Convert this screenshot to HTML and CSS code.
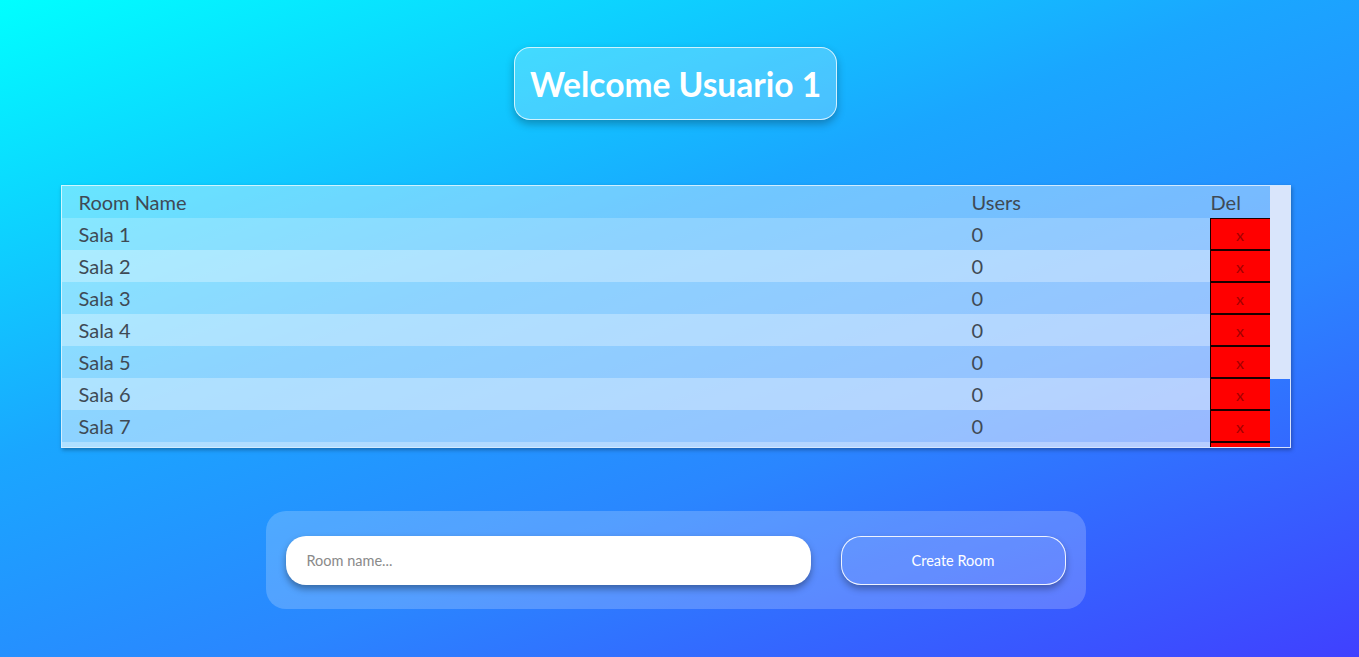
FILE: index.html
```html
<!DOCTYPE html>
<html lang="es">
<head>
<meta charset="utf-8">
<title>Rooms</title>
<link rel="stylesheet" href="styles.css">
</head>
<body>
<main class="page">
  <h1 class="welcome">Welcome Usuario 1</h1>
  <div class="rooms">
    <div class="rooms-scroll">
      <table class="rooms-table">
        <thead>
          <tr><th class="c-name">Room Name</th><th class="c-users">Users</th><th class="c-del">Del</th></tr>
        </thead>
        <tbody>
          <tr><td class="c-name">Sala 1</td><td class="c-users">0</td><td class="c-del"><button class="del">x</button></td></tr>
          <tr><td class="c-name">Sala 2</td><td class="c-users">0</td><td class="c-del"><button class="del">x</button></td></tr>
          <tr><td class="c-name">Sala 3</td><td class="c-users">0</td><td class="c-del"><button class="del">x</button></td></tr>
          <tr><td class="c-name">Sala 4</td><td class="c-users">0</td><td class="c-del"><button class="del">x</button></td></tr>
          <tr><td class="c-name">Sala 5</td><td class="c-users">0</td><td class="c-del"><button class="del">x</button></td></tr>
          <tr><td class="c-name">Sala 6</td><td class="c-users">0</td><td class="c-del"><button class="del">x</button></td></tr>
          <tr><td class="c-name">Sala 7</td><td class="c-users">0</td><td class="c-del"><button class="del">x</button></td></tr>
          <tr><td class="c-name">Sala 8</td><td class="c-users">0</td><td class="c-del"><button class="del">x</button></td></tr>
          <tr><td class="c-name">Sala 9</td><td class="c-users">0</td><td class="c-del"><button class="del">x</button></td></tr>
          <tr><td class="c-name">Sala 10</td><td class="c-users">0</td><td class="c-del"><button class="del">x</button></td></tr>
        </tbody>
      </table>
    </div>
    <div class="scrollbar"><div class="scrollbar-thumb"></div></div>
  </div>
  <form class="create">
    <input class="create-input" type="text" placeholder="Room name...">
    <button class="create-btn" type="button">Create Room</button>
  </form>
</main>
</body>
</html>
```
FILE: styles.css
```css
html, body {
  margin: 0;
  height: 100%;
}
body {
  background: linear-gradient(160deg, #00ffff 0%, #1aa6ff 40%, #2a86ff 65%, #4040ff 100%);
  font-family: "Lato", "Open Sans", sans-serif;
  overflow: hidden;
}
.page {
  display: flex;
  flex-direction: column;
  align-items: center;
  padding-top: 47px;
  padding-right: 8px;
  box-sizing: border-box;
  height: 657px;
}
.welcome {
  margin: 0;
  width: 323px;
  height: 73px;
  box-sizing: border-box;
  display: flex;
  align-items: center;
  justify-content: center;
  border-radius: 16px;
  border: 1px solid rgba(255, 255, 255, 0.75);
  background: rgba(255, 255, 255, 0.22);
  box-shadow: 0 4px 8px rgba(0, 0, 0, 0.28);
  color: #fff;
  font-size: 33.5px;
  font-weight: 700;
  white-space: nowrap;
}
.rooms {
  margin-top: 65px;
  width: 1230px;
  height: 263px;
  box-sizing: border-box;
  border: 1px solid rgba(255, 255, 255, 0.8);
  box-shadow: 1px 2px 4px rgba(0, 0, 0, 0.3);
  display: flex;
}
.rooms-scroll {
  flex: 1;
  overflow: hidden;
}
.scrollbar {
  width: 20px;
  flex: none;
}
.scrollbar-thumb {
  height: 193px;
  background: #d9e5fb;
}
.rooms-table {
  width: 100%;
  border-collapse: collapse;
  table-layout: fixed;
  font-size: 20px;
  color: #3f4a55;
}
.rooms-table th,
.rooms-table td {
  height: 32px;
  padding: 0;
  text-align: left;
  font-weight: 400;
  vertical-align: middle;
  white-space: nowrap;
}
.rooms-table thead tr {
  background: rgba(255, 255, 255, 0.38);
}
.rooms-table tbody tr:nth-child(odd) {
  background: rgba(255, 255, 255, 0.5);
}
.rooms-table tbody tr:nth-child(even) {
  background: rgba(255, 255, 255, 0.65);
}
.c-name {
  padding-left: 17px !important;
  width: 876px;
}
.c-users {
  padding-left: 17px !important;
  width: 238px;
}
.c-del {
  width: 60px;
}
th.c-del {
  padding-left: 1px !important;
}
.del {
  display: block;
  width: 100%;
  height: 32px;
  margin: 0;
  border: 1px solid #1a0000;
  background: #ff0000;
  color: #a30000;
  font-family: "Lato", sans-serif;
  font-size: 16px;
  padding: 0;
}
.create {
  margin-top: 63px;
  width: 820px;
  height: 98px;
  box-sizing: border-box;
  padding: 24px 19px 24px 20px;
  border-radius: 20px;
  background: rgba(255, 255, 255, 0.2);
  display: flex;
  gap: 30px;
  align-items: center;
}
.create-input {
  width: 525px;
  height: 49px;
  box-sizing: border-box;
  border: none;
  border-radius: 20px;
  background: #fff;
  padding: 0 21px;
  font-family: "Lato", sans-serif;
  font-size: 14.5px;
  box-shadow: 0 4px 7px rgba(0, 0, 0, 0.35);
  outline: none;
}
.create-input::placeholder {
  color: #8a8a8a;
}
.create-btn {
  width: 225px;
  height: 49px;
  box-sizing: border-box;
  border: 1px solid rgba(255, 255, 255, 0.9);
  border-radius: 20px;
  background: rgba(255, 255, 255, 0.05);
  color: #fff;
  font-family: "Lato", sans-serif;
  font-size: 14.5px;
  box-shadow: 0 4px 7px rgba(0, 0, 0, 0.3);
}
```
